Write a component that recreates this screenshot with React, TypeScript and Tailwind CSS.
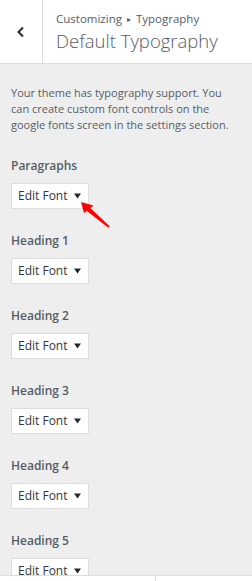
import React from "react";

const sections = ["Paragraphs", "Heading 1", "Heading 2", "Heading 3", "Heading 4", "Heading 5"];

function FontButton() {
  return (
    <button className="flex h-[26px] w-[78px] items-center border border-[#dddddd] bg-white pl-[6px] text-[12px] text-[#32373c]">
      <span className="leading-[16px]">Edit Font</span>
      <svg className="ml-auto mr-[7px]" width="7" height="6" viewBox="0 0 7 6">
        <path d="M0 0.5h7L3.5 5.5z" fill="#23282d" />
      </svg>
    </button>
  );
}

export default function App() {
  return (
    <div className="relative h-[581px] w-[252px] overflow-hidden bg-[#eeeeee] font-['Open_Sans',sans-serif]">
      <header className="flex h-[64px] border-b border-[#dddddd] bg-white">
        <button className="flex w-[43px] items-center justify-center border-r border-[#dddddd]">
          <svg width="10" height="12" viewBox="0 0 10 12">
            <path d="M7 1.5L2.5 6L7 10.5" stroke="#23282d" strokeWidth="2" fill="none" />
          </svg>
        </button>
        <div className="flex flex-col pl-[13px] pt-[10px]">
          <span className="text-[11.5px] leading-[18px] text-[#555d66]">
            Customizing <span className="mx-[2px] text-[8px] align-[1px]">▸</span> Typography
          </span>
          <span className="text-[18.5px] font-light leading-[26px] text-[#555d66]">Default Typography</span>
        </div>
      </header>

      <p className="px-[11px] pt-[21px] text-[11px] leading-[16px] text-[#555d66]">
        Your theme has typography support. You can create custom font controls on the google fonts screen in the settings section.
      </p>

      <div className="flex flex-col gap-[23px] px-[11px] pt-[24px]">
        {sections.map((s) => (
          <div key={s} className="flex flex-col gap-[8px]">
            <span className="text-[12px] font-semibold leading-[18px] text-[#555d66]">{s}</span>
            <FontButton />
          </div>
        ))}
      </div>

      {/* red annotation arrow */}
      <svg className="absolute left-[74px] top-[196px]" width="40" height="36" viewBox="0 0 40 36">
        <path d="M15.5 11.3L35.6 30.3L34.4 31.7L12.5 14.7z" fill="#ff0000" />
        <path d="M7 6L19.5 9.5L10 17z" fill="#ff0000" />
      </svg>

      <footer className="absolute bottom-0 left-0 flex h-[6px] w-full border-t border-[#dddddd] bg-white">
        <div className="w-[156px] border-r border-[#dddddd]" />
      </footer>
    </div>
  );
}
